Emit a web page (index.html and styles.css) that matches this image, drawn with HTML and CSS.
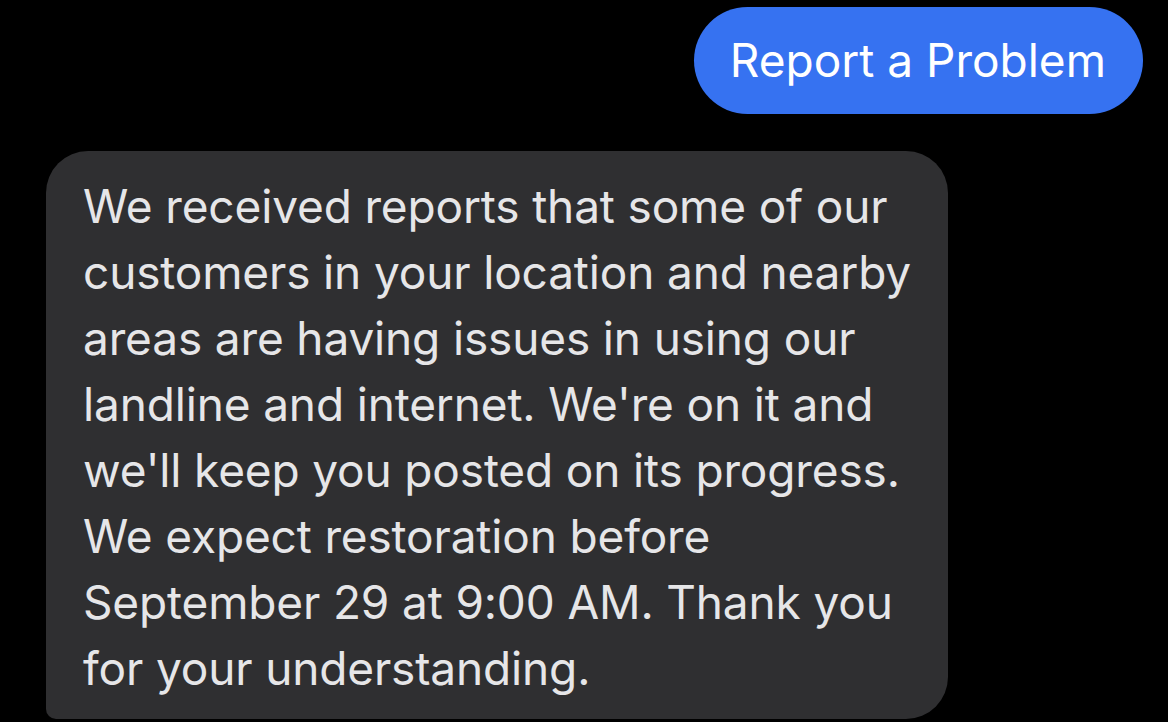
FILE: index.html
```html
<!DOCTYPE html>
<html lang="en">
<head>
<meta charset="utf-8">
<title>Messages</title>
<link rel="stylesheet" href="styles.css">
</head>
<body>
<main class="thread">
  <div class="row row-out">
    <div class="bubble bubble-out">Report a Problem</div>
  </div>
  <div class="row row-in">
    <div class="bubble bubble-in">We received reports that some of our<br>customers in your location and nearby<br>areas are having issues in using our<br>landline and internet. We're on it and<br>we'll keep you posted on its progress.<br>We expect restoration before<br>September 29 at 9:00 AM. Thank you<br>for your understanding.</div>
  </div>
</main>
</body>
</html>
```
FILE: styles.css
```css
html, body {
  margin: 0;
  height: 100%;
  background: #000;
}

body {
  font-family: Inter, "Noto Sans", sans-serif;
  overflow: hidden;
}

.thread {
  display: flex;
  flex-direction: column;
  gap: 37px;
  padding: 7px 25px 0 46px;
}

.row {
  display: flex;
}

.row-out {
  justify-content: flex-end;
}

.bubble {
  white-space: nowrap;
  font-size: 46px;
}

.bubble-out {
  background: #3672f1;
  color: #fff;
  line-height: 107px;
  height: 107px;
  padding: 0 37px 0 36px;
  border-radius: 54px;
}

.bubble-in {
  background: #2f2f31;
  color: #e6e6e8;
  line-height: 66px;
  width: 902px;
  box-sizing: border-box;
  padding: 22px 20px 18px 37px;
  border-radius: 42px 42px 42px 10px;
  letter-spacing: -0.15px;
}
```
